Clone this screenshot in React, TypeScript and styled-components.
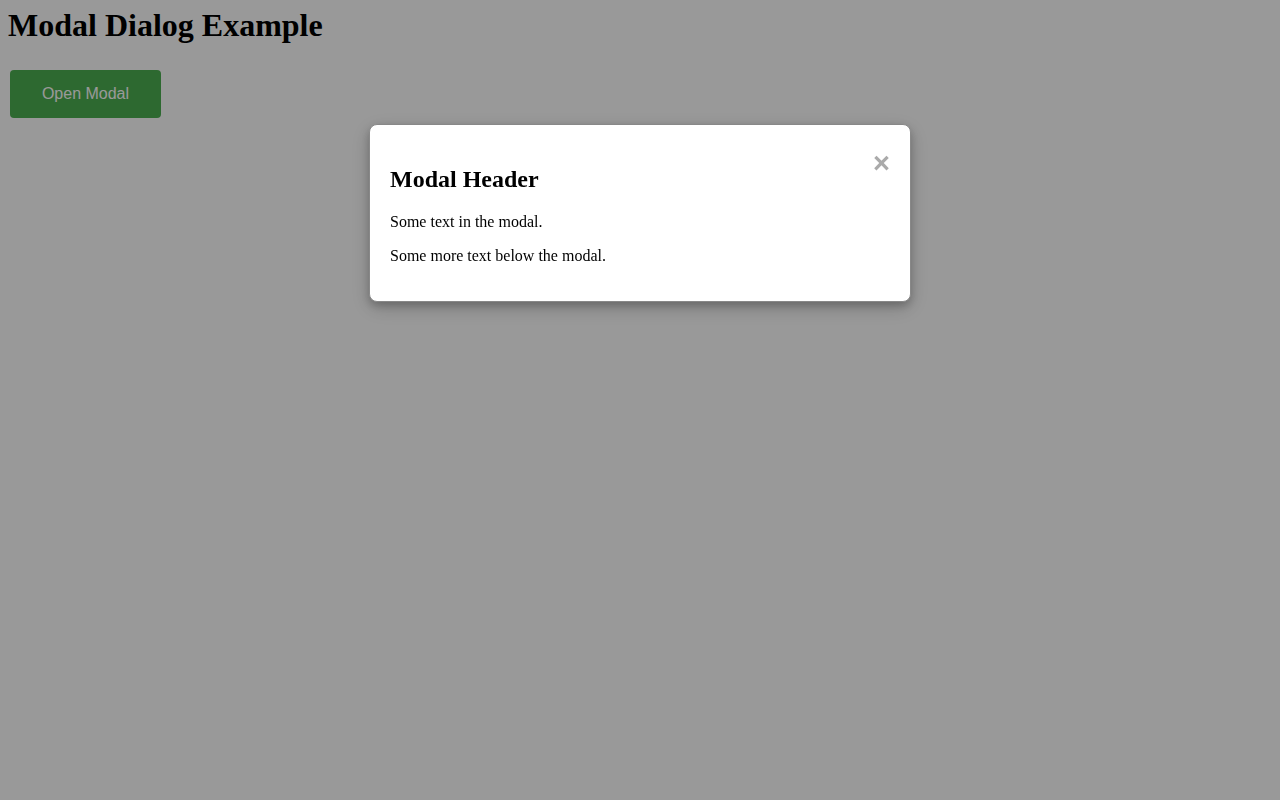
import { FC, useState } from "react";
import styled, { createGlobalStyle } from "styled-components";

const GlobalStyle = createGlobalStyle`
  html, body {
    margin: 0;
    padding: 0;
    background: #ffffff;
  }
  body {
    margin: 8px;
    font-family: "Liberation Serif", "Times New Roman", serif;
    color: #000;
  }
`;

const App: FC = () => {
  const [open, setOpen] = useState(true);

  return (
    <>
      <GlobalStyle />
      <Title>Modal Dialog Example</Title>
      <OpenButton onClick={() => setOpen(true)}>Open Modal</OpenButton>
      {open && (
        <Overlay onClick={() => setOpen(false)}>
          <ModalContent onClick={(e) => e.stopPropagation()}>
            <Close onClick={() => setOpen(false)}>&times;</Close>
            <ModalHeader>Modal Header</ModalHeader>
            <Text>Some text in the modal.</Text>
            <Text>Some more text below the modal.</Text>
          </ModalContent>
        </Overlay>
      )}
    </>
  );
};

export default App;

const Title = styled.h1`
  font-size: 32px;
  font-weight: bold;
  margin: -1px 0 26px;
`;

const OpenButton = styled.button`
  display: block;
  margin-left: 2px;
  width: 151px;
  height: 48px;
  background-color: #4caf50;
  color: #ffffff;
  border: none;
  border-radius: 4px;
  font-family: "Liberation Sans", Arial, sans-serif;
  font-size: 16px;
  cursor: pointer;
`;

const Overlay = styled.div`
  position: fixed;
  inset: 0;
  z-index: 10;
  padding-top: 124px;
  background-color: rgba(0, 0, 0, 0.4);
  overflow: auto;
`;

const ModalContent = styled.div`
  width: 500px;
  margin: 0 auto;
  padding: 21px 20px 20px;
  background-color: #ffffff;
  border: 1px solid #888888;
  border-radius: 8px;
  box-shadow: 0 4px 8px 0 rgba(0, 0, 0, 0.2), 0 6px 20px 0 rgba(0, 0, 0, 0.19);
`;

const Close = styled.span`
  float: right;
  color: #aaaaaa;
  font-family: "Liberation Sans", Arial, sans-serif;
  font-size: 29px;
  font-weight: bold;
  line-height: 34px;
  cursor: pointer;
  &:hover {
    color: #000;
  }
`;

const ModalHeader = styled.h2`
  font-size: 24px;
  font-weight: bold;
  margin: 0.83em 0;
`;

const Text = styled.p`
  font-size: 16px;
  margin: 16px 0;
`;
